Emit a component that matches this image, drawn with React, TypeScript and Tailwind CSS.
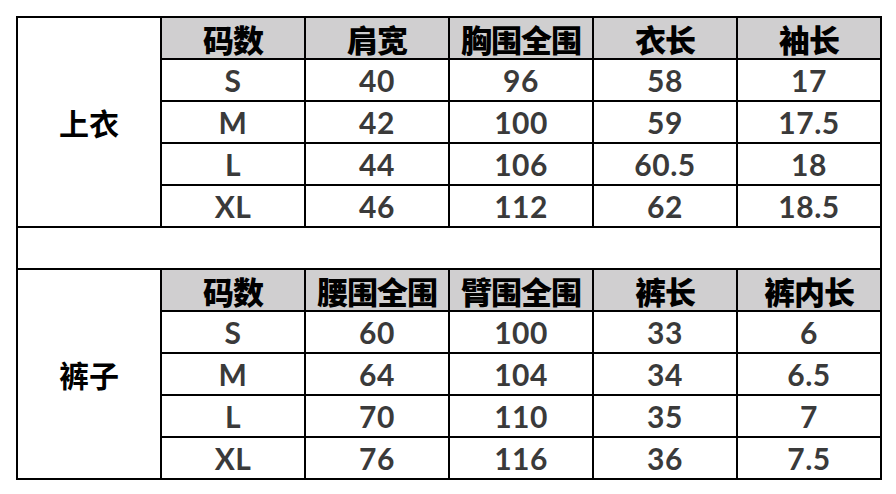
const TOP_HEAD = ["码数", "肩宽", "胸围全围", "衣长", "袖长"];
const TOP_ROWS = [
  ["S", "40", "96", "58", "17"],
  ["M", "42", "100", "59", "17.5"],
  ["L", "44", "106", "60.5", "18"],
  ["XL", "46", "112", "62", "18.5"],
];

const PANTS_HEAD = ["码数", "腰围全围", "臂围全围", "裤长", "裤内长"];
const PANTS_ROWS = [
  ["S", "60", "100", "33", "6"],
  ["M", "64", "104", "34", "6.5"],
  ["L", "70", "110", "35", "7"],
  ["XL", "76", "116", "36", "7.5"],
];

const cjk = "[font-family:'Noto_Sans_CJK_SC',sans-serif]";
const num = "[font-family:Lato,'Noto_Sans_CJK_SC',sans-serif]";

function Section({
  label,
  head,
  rows,
}: {
  label: string;
  head: string[];
  rows: string[][];
}) {
  return (
    <>
      <tr className="h-[42px]">
        <td
          rowSpan={5}
          className={`border-2 border-black text-center align-middle text-[30px] font-bold text-black ${cjk}`}
        >
          {label}
        </td>
        {head.map((h) => (
          <td
            key={h}
            className={`border-2 border-black bg-[#d0cfd0] text-center text-[31px] leading-none font-black tracking-[-1px] text-black ${cjk}`}
          >
            {h}
          </td>
        ))}
      </tr>
      {rows.map((r) => (
        <tr key={r[0]} className="h-[42px]">
          {r.map((c, i) => (
            <td
              key={i}
              className={`border-2 border-black text-center text-[30px] leading-none font-bold tracking-[0.5px] text-[#3a3a3a] ${num}`}
            >
              {c}
            </td>
          ))}
        </tr>
      ))}
    </>
  );
}

export default function App() {
  return (
    <div className="h-[494px] w-[896px] bg-white pl-[16px] pt-[16px]">
      <table className="w-[864px] table-fixed border-collapse">
        <colgroup>
          {Array.from({ length: 6 }).map((_, i) => (
            <col key={i} className="w-[144px]" />
          ))}
        </colgroup>
        <tbody>
          <Section label="上衣" head={TOP_HEAD} rows={TOP_ROWS} />
          <tr className="h-[42px]">
            <td colSpan={6} className="border-2 border-black" />
          </tr>
          <Section label="裤子" head={PANTS_HEAD} rows={PANTS_ROWS} />
        </tbody>
      </table>
    </div>
  );
}
